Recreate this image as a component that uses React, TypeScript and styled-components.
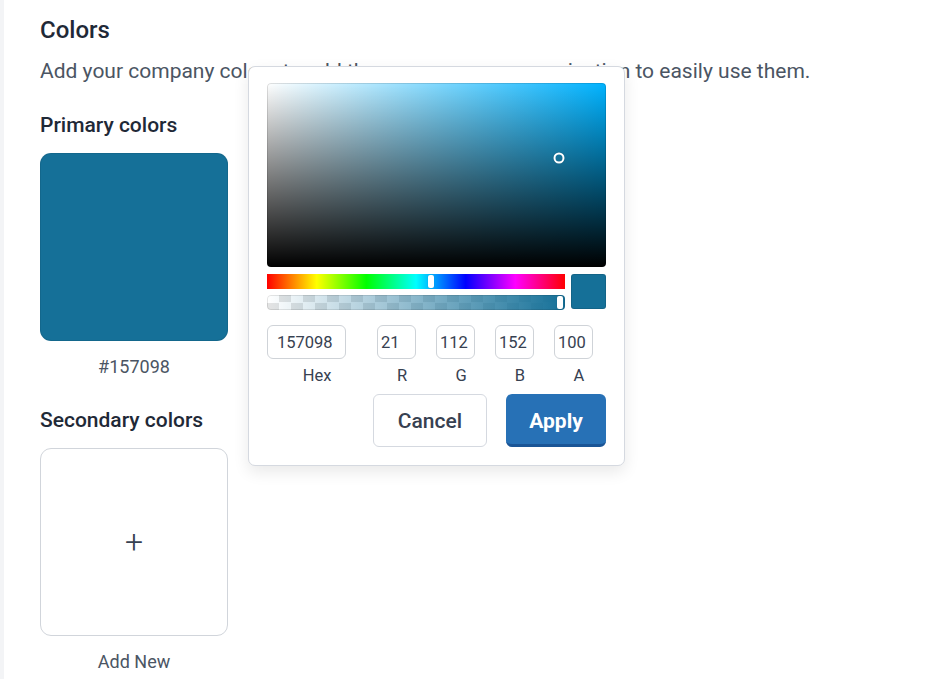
import React from 'react';
import styled, { createGlobalStyle } from 'styled-components';

const GlobalStyle = createGlobalStyle`
  html, body {
    margin: 0;
    padding: 0;
    background: #ffffff;
    font-family: Roboto, "Noto Sans", Arial, sans-serif;
  }
`;

const Page = styled.div`
  display: flex;
  min-height: 679px;
  overflow: hidden;
`;

const Rail = styled.div`
  width: 4px;
  flex-shrink: 0;
  background: #f3f4f6;
`;

const Main = styled.main`
  position: relative;
  flex: 1;
  padding: 15px 36px 0;
`;

const Title = styled.h2`
  margin: 0;
  font-size: 24px;
  line-height: 30px;
  font-weight: 500;
  color: #1f2937;
`;

const Description = styled.p`
  margin: 12px 0 0;
  font-size: 21px;
  line-height: 28px;
  color: #4b5563;
  white-space: nowrap;
`;

const SectionTitle = styled.h3<{ $top: number }>`
  margin: ${(p) => p.$top}px 0 0;
  font-size: 21px;
  line-height: 28px;
  font-weight: 500;
  color: #1f2937;
`;

const SwatchItem = styled.div`
  display: flex;
  flex-direction: column;
  align-items: center;
  width: 188px;
  margin-top: 14px;
`;

const Swatch = styled.div<{ $color?: string }>`
  box-sizing: border-box;
  width: 188px;
  height: 188px;
  border-radius: 11px;
  background: ${(p) => p.$color ?? '#ffffff'};
  border: 1px solid ${(p) => (p.$color ? 'rgba(0,0,0,0.08)' : '#d1d5db')};
  display: flex;
  align-items: center;
  justify-content: center;
  color: #374151;
  font-size: 32px;
  font-weight: 300;
`;

const SwatchCaption = styled.span`
  margin-top: 14px;
  font-size: 18px;
  line-height: 24px;
  color: #4b5563;
`;

const Picker = styled.div`
  position: absolute;
  left: 244px;
  top: 66px;
  box-sizing: border-box;
  width: 377px;
  padding: 16px 18px 18px;
  background: #ffffff;
  border: 1px solid #d5d9e0;
  border-radius: 7px;
  box-shadow: 0 6px 16px rgba(0, 0, 0, 0.09);
`;

const Saturation = styled.div`
  position: relative;
  height: 184px;
  border-radius: 4px;
  background:
    linear-gradient(to top, #000000, rgba(0, 0, 0, 0)),
    linear-gradient(to right, #ffffff, hsl(198, 100%, 50%));
  box-shadow: inset 0 0 0 1px rgba(0, 0, 0, 0.12);
`;

const SatThumb = styled.div`
  position: absolute;
  width: 7px;
  height: 7px;
  border: 2px solid #ffffff;
  border-radius: 50%;
  transform: translate(-50%, -50%);
  box-shadow: 0 0 1px rgba(0, 0, 0, 0.4);
`;

const SliderRow = styled.div`
  display: flex;
  gap: 6px;
  margin-top: 7px;
`;

const Sliders = styled.div`
  flex: 1;
  display: flex;
  flex-direction: column;
  gap: 6px;
`;

const Bar = styled.div<{ $kind: 'hue' | 'alpha' }>`
  position: relative;
  height: 15px;
  border-radius: ${(p) => (p.$kind === 'alpha' ? '4px' : '0')};
  background: ${(p) =>
    p.$kind === 'hue'
      ? 'linear-gradient(to right, #ff0000, #ffff00, #00ff00, #00ffff, #0000ff, #ff00ff, #ff0000)'
      : 'linear-gradient(to right, rgba(21,112,152,0), rgba(21,112,152,1)), repeating-conic-gradient(#e4e4e4 0 25%, #ffffff 0 50%) 0 0 / 24px 15px'};
  box-shadow: ${(p) => (p.$kind === 'alpha' ? 'inset 0 0 0 1px rgba(0,0,0,0.1)' : 'none')};
`;

const BarThumb = styled.div`
  position: absolute;
  top: 1px;
  width: 6px;
  height: 13px;
  margin-left: -3px;
  border-radius: 2px;
  background: #ffffff;
  box-shadow: 0 0 1px rgba(0, 0, 0, 0.25);
`;

const Preview = styled.div`
  width: 35px;
  height: 35px;
  border-radius: 3px;
  background: #157098;
  box-shadow: inset 0 0 0 1px rgba(0, 0, 0, 0.1);
`;

const Fields = styled.div`
  display: flex;
  gap: 20px;
  margin-top: 15px;
`;

const Field = styled.label<{ $extra?: number }>`
  display: flex;
  flex-direction: column;
  align-items: center;
  margin-right: ${(p) => p.$extra ?? 0}px;
`;

const Input = styled.input<{ $w: number; $pad: number }>`
  box-sizing: border-box;
  width: ${(p) => p.$w}px;
  height: 34px;
  padding: 0 ${(p) => p.$pad}px;
  border: 1px solid #cfd3d8;
  border-radius: 6px;
  font-family: inherit;
  font-size: 16.5px;
  color: #374151;
  outline: none;
`;

const FieldLabel = styled.span<{ $shift: number }>`
  margin-top: 7px;
  padding-left: ${(p) => p.$shift}px;
  font-size: 16.5px;
  line-height: 20px;
  color: #374151;
`;

const Actions = styled.div`
  display: flex;
  justify-content: flex-end;
  gap: 19px;
  margin-top: 8px;
`;

const Button = styled.button<{ $primary?: boolean }>`
  box-sizing: border-box;
  height: 53px;
  width: ${(p) => (p.$primary ? '100px' : '114px')};
  border-radius: 6px;
  font-family: inherit;
  font-size: 21px;
  font-weight: ${(p) => (p.$primary ? 700 : 500)};
  color: ${(p) => (p.$primary ? '#ffffff' : '#374151')};
  background: ${(p) => (p.$primary ? '#2771b6' : '#ffffff')};
  border: ${(p) => (p.$primary ? 'none' : '1px solid #d5d9e0')};
  border-bottom: ${(p) => (p.$primary ? '3px solid #1a5596' : '1px solid #d5d9e0')};
  padding: ${(p) => (p.$primary ? '3px 0 0' : '0')};
  cursor: pointer;
`;

const fields = [
  { label: 'Hex', value: '157098', w: 79, pad: 9, shift: 21, extra: 11 },
  { label: 'R', value: '21', w: 39, pad: 3, shift: 11 },
  { label: 'G', value: '112', w: 39, pad: 3, shift: 11 },
  { label: 'B', value: '152', w: 39, pad: 3, shift: 11 },
  { label: 'A', value: '100', w: 39, pad: 3, shift: 11 },
];

export default function App() {
  return (
    <>
      <GlobalStyle />
      <Page>
        <Rail />
        <Main>
          <Title>Colors</Title>
          <Description>
            Add your company colors to add them across your organization to easily use them.
          </Description>

          <SectionTitle $top={26}>Primary colors</SectionTitle>
          <SwatchItem>
            <Swatch $color="#157098" />
            <SwatchCaption>#157098</SwatchCaption>
          </SwatchItem>

          <SectionTitle $top={27}>Secondary colors</SectionTitle>
          <SwatchItem>
            <Swatch>+</Swatch>
            <SwatchCaption>Add New</SwatchCaption>
          </SwatchItem>

          <Picker>
            <Saturation>
              <SatThumb style={{ left: '86%', top: '41%' }} />
            </Saturation>
            <SliderRow>
              <Sliders>
                <Bar $kind="hue">
                  <BarThumb style={{ left: `${(198 / 360) * 100}%` }} />
                </Bar>
                <Bar $kind="alpha">
                  <BarThumb style={{ left: 'calc(100% - 5px)' }} />
                </Bar>
              </Sliders>
              <Preview />
            </SliderRow>
            <Fields>
              {fields.map((f) => (
                <Field key={f.label} $extra={f.extra}>
                  <Input $w={f.w} $pad={f.pad} defaultValue={f.value} />
                  <FieldLabel $shift={f.shift}>{f.label}</FieldLabel>
                </Field>
              ))}
            </Fields>
            <Actions>
              <Button>Cancel</Button>
              <Button $primary>Apply</Button>
            </Actions>
          </Picker>
        </Main>
      </Page>
    </>
  );
}
